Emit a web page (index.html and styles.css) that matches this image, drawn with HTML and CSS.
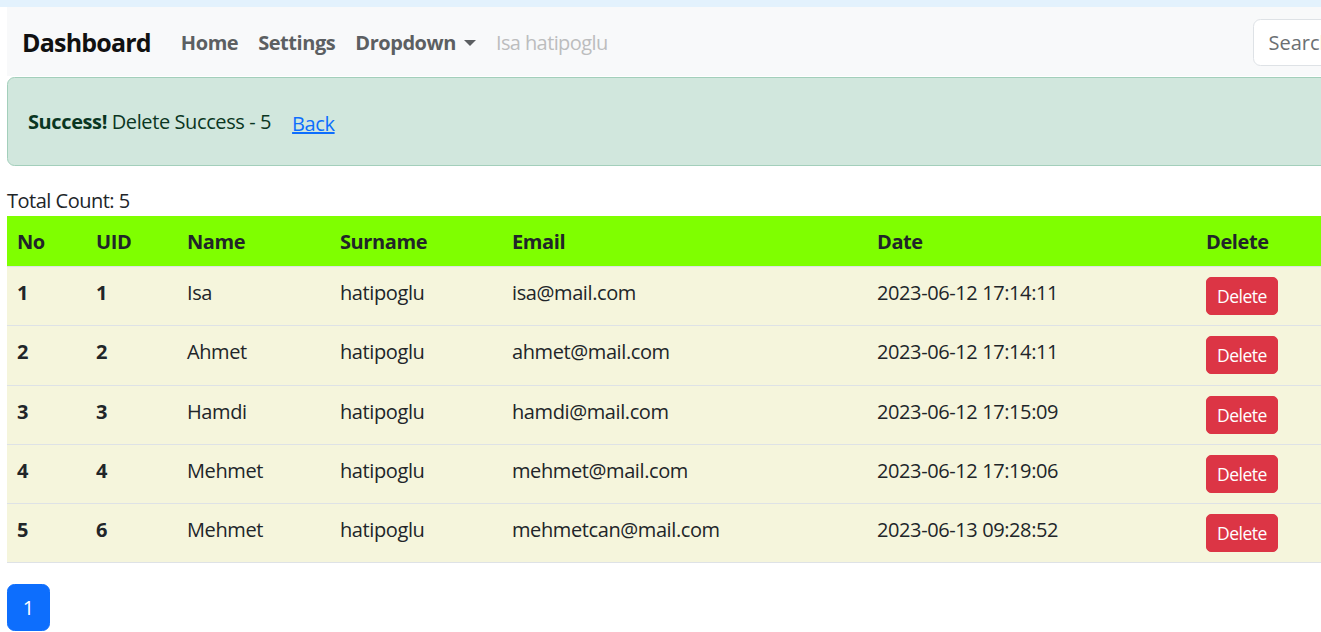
FILE: index.html
```html
<!DOCTYPE html>
<html lang="en">
<head>
<meta charset="utf-8">
<title>Dashboard</title>
<link rel="stylesheet" href="styles.css">
</head>
<body>
<div class="topstrip"></div>
<div class="page">
  <nav class="navbar">
    <a class="brand" href="#">Dashboard</a>
    <ul class="nav">
      <li><a class="nav-link" href="#">Home</a></li>
      <li><a class="nav-link" href="#">Settings</a></li>
      <li><a class="nav-link dropdown" href="#">Dropdown<span class="caret"></span></a></li>
      <li><span class="nav-link disabled">Isa hatipoglu</span></li>
    </ul>
    <form class="search">
      <input class="search-input" type="search" placeholder="Search">
      <button class="search-btn" type="button">Search</button>
    </form>
  </nav>

  <div class="alert">
    <span><strong>Success!</strong> Delete Success - 5</span>
    <a class="btn-link" href="#">Back</a>
  </div>

  <div class="total">Total Count: 5</div>

  <table class="table">
    <thead>
      <tr>
        <th class="c-no">No</th>
        <th class="c-uid">UID</th>
        <th class="c-name">Name</th>
        <th class="c-surname">Surname</th>
        <th class="c-email">Email</th>
        <th class="c-date">Date</th>
        <th class="c-del">Delete</th>
      </tr>
    </thead>
    <tbody>
      <tr><th>1</th><th>1</th><td>Isa</td><td>hatipoglu</td><td>isa@mail.com</td><td>2023-06-12 17:14:11</td><td><button class="btn-danger" type="button">Delete</button></td></tr>
      <tr><th>2</th><th>2</th><td>Ahmet</td><td>hatipoglu</td><td>ahmet@mail.com</td><td>2023-06-12 17:14:11</td><td><button class="btn-danger" type="button">Delete</button></td></tr>
      <tr><th>3</th><th>3</th><td>Hamdi</td><td>hatipoglu</td><td>hamdi@mail.com</td><td>2023-06-12 17:15:09</td><td><button class="btn-danger" type="button">Delete</button></td></tr>
      <tr><th>4</th><th>4</th><td>Mehmet</td><td>hatipoglu</td><td>mehmet@mail.com</td><td>2023-06-12 17:19:06</td><td><button class="btn-danger" type="button">Delete</button></td></tr>
      <tr><th>5</th><th>6</th><td>Mehmet</td><td>hatipoglu</td><td>mehmetcan@mail.com</td><td>2023-06-13 09:28:52</td><td><button class="btn-danger" type="button">Delete</button></td></tr>
    </tbody>
  </table>

  <ul class="pagination">
    <li><a class="page-link active" href="#">1</a></li>
  </ul>
</div>
</body>
</html>
```

FILE: styles.css
```css
html, body {
  margin: 0;
  padding: 0;
  overflow: hidden;
  background: #fff;
}
body {
  font-family: "Open Sans", "Liberation Sans", sans-serif;
  font-size: 20px;
  line-height: 1.5;
  color: #212529;
}
.topstrip {
  height: 7px;
  background: #e3f2fd;
}
.page {
  width: 1440px;
  padding-left: 7px;
}
.navbar {
  display: flex;
  align-items: center;
  background: #f8f9fa;
  padding: 11px 15px 9px;
  height: 49px;
  white-space: nowrap;
}
.brand {
  flex-shrink: 0;
  font-size: 25px;
  font-weight: 700;
  color: #111;
  text-decoration: none;
  margin-right: 20px;
  letter-spacing: -0.8px;
}
.nav {
  display: flex;
  flex-shrink: 0;
  list-style: none;
  margin: 0;
  padding: 0;
}
.nav-link {
  display: block;
  padding: 8px 10px;
  font-weight: 700;
  color: #5c5f62;
  text-decoration: none;
  letter-spacing: -0.45px;
}
.nav-link.disabled {
  font-weight: 400;
  color: #bcbdbe;
  letter-spacing: -0.6px;
}
.caret {
  display: inline-block;
  margin-left: 8px;
  vertical-align: 4px;
  border-top: 6px solid #5c5f62;
  border-left: 6px solid transparent;
  border-right: 6px solid transparent;
}
.search {
  display: flex;
  flex-shrink: 0;
  margin-left: 635px;
  gap: 10px;
}
.search-input {
  width: 210px;
  height: 47px;
  box-sizing: border-box;
  padding: 7px 15px;
  border: 1px solid #dee2e6;
  border-radius: 7.5px;
  background: #fff;
  font-family: inherit;
  font-size: 20px;
  color: #212529;
}
.search-input::placeholder {
  color: #6b6f73;
}
.search-btn {
  height: 47px;
  padding: 7px 15px;
  border: 1px solid #198754;
  border-radius: 7.5px;
  background: transparent;
  color: #198754;
  font-family: inherit;
  font-size: 20px;
}
.alert {
  display: flex;
  align-items: center;
  margin-top: 1px;
  padding: 20px;
  background: #d1e7dd;
  border: 1px solid #a3cfbb;
  border-radius: 7.5px;
  color: #0a3622;
  height: 47px;
}
.alert strong {
  font-weight: 700;
  letter-spacing: -0.4px;
}
.alert span {
  letter-spacing: -0.4px;
}
.btn-link {
  display: inline-block;
  margin-left: 6px;
  padding: 9px 15px 5px;
  color: #0d6efd;
  text-decoration: underline;
  letter-spacing: -0.4px;
}
.total {
  margin-top: 20px;
  letter-spacing: -0.5px;
}
.table {
  width: 100%;
  border-collapse: collapse;
  margin-bottom: 21px;
}
.table th, .table td {
  text-align: left;
  padding: 10px;
  border-bottom: 1px solid #dee2e6;
  vertical-align: top;
  letter-spacing: -0.4px;
  white-space: nowrap;
}
.table thead th {
  background: #7fff00;
  font-weight: 700;
  padding-top: 11px;
  padding-bottom: 9px;
}
.table tbody th, .table tbody td {
  background: #f5f5dc;
}
.table tbody th {
  font-weight: 700;
  padding-top: 11px;
  padding-bottom: 9px;
}
.table tbody td {
  padding-top: 11px;
  padding-bottom: 9px;
}
.table tbody td:last-child {
  padding-top: 10px;
  padding-bottom: 10.25px;
}
.c-no { width: 59px; }
.c-uid { width: 71px; }
.c-name { width: 133px; }
.c-surname { width: 152px; }
.c-email { width: 345px; }
.c-date { width: 309px; }
.btn-danger {
  display: block;
  height: 38px;
  padding: 0 10px;
  background: #dc3545;
  border: 1px solid #dc3545;
  border-radius: 5px;
  color: #fff;
  font-family: inherit;
  font-size: 17.5px;
  letter-spacing: -0.5px;
}
.pagination {
  display: flex;
  list-style: none;
  margin: 0;
  padding: 0;
}
.page-link {
  display: block;
  width: 43px;
  height: 47px;
  box-sizing: border-box;
  line-height: 45px;
  text-align: center;
  background: #0d6efd;
  border: 1px solid #0d6efd;
  border-radius: 7.5px;
  color: #fff;
  text-decoration: none;
}
```
